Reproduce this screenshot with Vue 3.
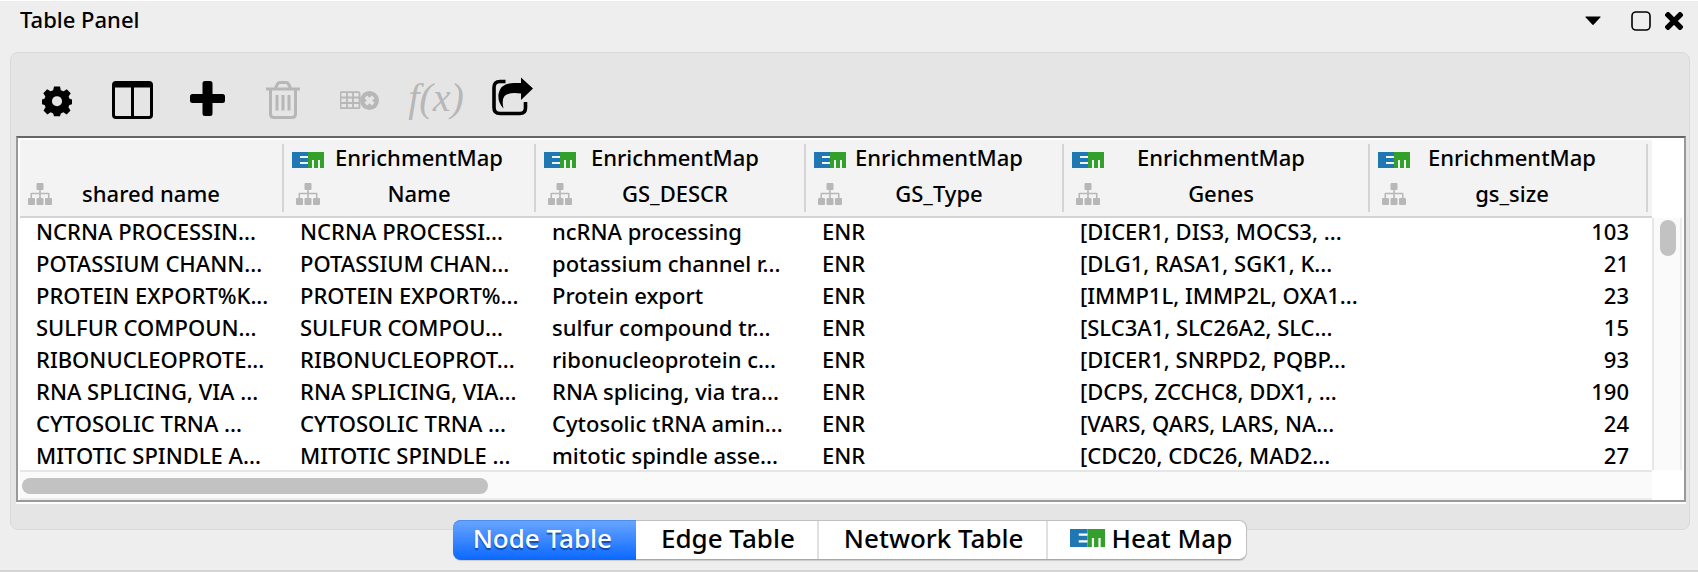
<script setup>
import { ref } from 'vue'

const columns = [
  { key: 'shared', name: 'shared name', group: '' },
  { key: 'name', name: 'Name', group: 'EnrichmentMap' },
  { key: 'descr', name: 'GS_DESCR', group: 'EnrichmentMap' },
  { key: 'type', name: 'GS_Type', group: 'EnrichmentMap' },
  { key: 'genes', name: 'Genes', group: 'EnrichmentMap' },
  { key: 'size', name: 'gs_size', group: 'EnrichmentMap' },
]

const rows = [
  ['NCRNA PROCESSIN...', 'NCRNA PROCESSI...', 'ncRNA processing', 'ENR', '[DICER1, DIS3, MOCS3, ...', 103],
  ['POTASSIUM CHANN...', 'POTASSIUM CHAN...', 'potassium channel r...', 'ENR', '[DLG1, RASA1, SGK1, K...', 21],
  ['PROTEIN EXPORT%K...', 'PROTEIN EXPORT%...', 'Protein export', 'ENR', '[IMMP1L, IMMP2L, OXA1...', 23],
  ['SULFUR COMPOUN...', 'SULFUR COMPOU...', 'sulfur compound tr...', 'ENR', '[SLC3A1, SLC26A2, SLC...', 15],
  ['RIBONUCLEOPROTE...', 'RIBONUCLEOPROT...', 'ribonucleoprotein c...', 'ENR', '[DICER1, SNRPD2, PQBP...', 93],
  ['RNA SPLICING, VIA ...', 'RNA SPLICING, VIA...', 'RNA splicing, via tra...', 'ENR', '[DCPS, ZCCHC8, DDX1, ...', 190],
  ['CYTOSOLIC TRNA ...', 'CYTOSOLIC TRNA ...', 'Cytosolic tRNA amin...', 'ENR', '[VARS, QARS, LARS, NA...', 24],
  ['MITOTIC SPINDLE A...', 'MITOTIC SPINDLE ...', 'mitotic spindle asse...', 'ENR', '[CDC20, CDC26, MAD2...', 27],
]

const tabs = ['Node Table', 'Edge Table', 'Network Table', 'Heat Map']
const active = ref('Node Table')
</script>

<template>
  <main class="window">
    <header class="titlebar">
      <h1>Table Panel</h1>
      <div class="controls">
        <button type="button" class="menu" aria-label="Panel menu">
          <svg width="16" height="10" viewBox="0 0 16 10"><path d="M1 .5h14q1 0 .4.8L8.800 8.600q-.8.800-1.600 0L.6 1.300Q0 .5 1 .5z" /></svg>
        </button>
        <button type="button" class="maximize" aria-label="Maximize">
          <svg width="20" height="20" viewBox="0 0 20 20"><rect x="1" y="1" width="18" height="18" rx="4" fill="none" stroke="#000" stroke-width="1.600" /></svg>
        </button>
        <button type="button" aria-label="Close">
          <svg width="18" height="18" viewBox="0 0 18 18"><path d="M3 3l12 12M15 3L3 15" stroke="#000" stroke-width="5.400" stroke-linecap="square" /></svg>
        </button>
      </div>
    </header>

    <section class="panel">
      <div class="toolbar">
        <button type="button" aria-label="Settings" class="gear">
          <svg width="30" height="32" viewBox="-16 -16 32 32">
            <path fill-rule="evenodd" d="M-3.200-15.500h6.400l.9 4 2.900 1.200 3.500-2.200 4.100 4.100-2.200 3.500 1 2.500 3.100.8v5l-3.300.9-1 2.400 2.200 3.500-4.100 4.100-3.500-2.200-2.700 1.100-.9 3h-6.400l-.9-3-2.700-1.100-3.500 2.200-4.100-4.100 2.200-3.500-1-2.400-3.300-.9v-5l3.100-.8 1-2.500-2.200-3.500 4.100-4.100 3.500 2.200 2.900-1.200zM0-5.200a5.400 5.400 0 1 0 0 10.800a5.400 5.400 0 1 0 0-10.800z" />
          </svg>
        </button>
        <button type="button" aria-label="Show columns" class="cols">
          <svg width="41" height="38" viewBox="0 0 41 38"><path fill-rule="evenodd" d="M4 0h33q4 0 4 4v30q0 4-4 4H4q-4 0-4-4V4q0-4 4-4zM3 6.500v27.500q0 1 1 1h15V6.500zM22 6.500V35h15q1 0 1-1V6.500z" /></svg>
        </button>
        <button type="button" aria-label="Add column" class="plus">
          <svg width="35" height="35" viewBox="0 0 35 35"><path d="M15 0h5q2.500 0 2.500 2.500v10.500h10q2.500 0 2.500 2.500v4q0 2.500-2.500 2.500h-10v10.500q0 2.500-2.500 2.500h-5q-2.500 0-2.500-2.500V22h-10Q0 22 0 19.500v-4Q0 13 2.500 13h10V2.500Q12.500 0 15 0z" /></svg>
        </button>
        <button type="button" aria-label="Delete column" class="trash" disabled>
          <svg width="34" height="38" viewBox="0 0 34 38" fill="none" stroke="#b7b7b7" stroke-width="3"><path d="M0 8h34M9 8l2.500-5q.8-1.500 2.500-1.500h6q1.700 0 2.500 1.500L25 8M4.500 8v25q0 3.500 3.500 3.500h18q3.500 0 3.500-3.500V8M11 14v15.500M17 14v15.500M23 14v15.500" /></svg>
        </button>
        <button type="button" aria-label="Delete table" class="deltable" disabled>
          <svg width="39" height="20" viewBox="0 0 39 20" fill="none" stroke="#b7b7b7">
            <path d="M1.500 1.200h17q1 0 1 1v14q0 1-1 1h-17q-1 0-1-1V2.200q0-1 1-1zM1 6.500h18M1 12h18M7 2v15M13 2v15" stroke-width="1.800" />
            <circle cx="29.500" cy="9.500" r="9.500" fill="#b7b7b7" stroke="none" />
            <path d="M25.800 5.800l7.400 7.400M33.200 5.800l-7.400 7.400" stroke="#e5e5e5" stroke-width="3.800" />
          </svg>
        </button>
        <button type="button" aria-label="Function builder" class="fx" disabled>f(x)</button>
        <button type="button" aria-label="Export" class="share">
          <svg width="41" height="39" viewBox="0 0 41 39">
            <path d="M13.500 4.500H8Q2 4.500 2 10.500v20Q2 36.500 8 36.500h20q5.500 0 5.500-5.500V25" fill="none" stroke="#000" stroke-width="3.600" />
            <path d="M29 0.500L41 11.500 29 23v-6.500Q16 15 12.500 19 9.500 23 11.500 31.500 5.500 25 6.500 17 8.500 6 22 6h7z" />
          </svg>
        </button>
      </div>

      <div class="frame">
        <div class="viewport">
          <table>
            <colgroup>
              <col v-for="c in columns" :key="c.key" :class="'w-' + c.key" />
            </colgroup>
            <thead>
              <tr>
                <th v-for="c in columns" :key="c.key" scope="col">
                  <div class="head">
                    <svg v-if="c.group" class="em" width="32" height="16" viewBox="0 0 32 16"><path fill="#1f78b4" d="M0 0h16v16H0z" /><path fill="#33a02c" d="M16 0h16v16H16z" /><path fill="#f3f3f3" d="M8 4h8v2H8zM8 10h8v2H8zM20 8h2v8h-2zM26 8h2v8h-2z" /></svg>
                    <span v-else></span>
                    <span class="label">{{ c.group }}</span>
                    <svg class="site" width="24" height="22" viewBox="0 0 24 22"><path fill="#b7b7b7" d="M9.500 0h5q1 0 1 1v5q0 1-1 1h-1.700v2.700h7.700q1 0 1 1V15h1.500q1 0 1 1v5q0 1-1 1h-5q-1 0-1-1v-5q0-1 1-1h2v-3.700h-7.200V15h1.700q1 0 1 1v5q0 1-1 1h-5q-1 0-1-1v-5q0-1 1-1h1.700v-3.700H4V15h2q1 0 1 1v5q0 1-1 1H1q-1 0-1-1v-5q0-1 1-1h1.500v-4.300q0-1 1-1h7.700V7H9.500q-1 0-1-1V1q0-1 1-1z" /></svg>
                    <span class="label">{{ c.name }}</span>
                  </div>
                </th>
              </tr>
            </thead>
            <tbody>
              <tr v-for="(r, i) in rows" :key="i">
                <td v-for="(v, j) in r" :key="j">{{ v }}</td>
              </tr>
            </tbody>
          </table>
        </div>
        <div class="vbar"><div class="vthumb"></div></div>
        <div class="hbar"><div class="hthumb"></div></div>
      </div>
    </section>

    <nav class="tabs" role="tablist">
      <button
        v-for="t in tabs"
        :key="t"
        type="button"
        role="tab"
        :aria-selected="active === t"
        :class="{ on: active === t }"
        @click="active = t"
      >
        <svg v-if="t === 'Heat Map'" width="35" height="18" viewBox="0 0 32 16" preserveAspectRatio="none"><path fill="#1f78b4" d="M0 0h16v16H0z" /><path fill="#33a02c" d="M16 0h16v16H16z" /><path fill="#fff" d="M8 4h8v2H8zM8 10h8v2H8zM20 8h2v8h-2zM26 8h2v8h-2z" /></svg>
        {{ t }}
      </button>
    </nav>
  </main>
</template>

<style>
body {
  background: #eee;
}
</style>

<style scoped>
* {
  box-sizing: border-box;
}
.window {
  font-family: "Noto Sans", "Open Sans", sans-serif;
  font-size: 22px;
  font-weight: 500;
  color: #000;
  background: #eee;
  border-top: 1px solid #fff;
  border-bottom: 2px solid #d4d4d4;
  padding: 0 8px 10px 10px;
}
button {
  margin: 0;
  padding: 0;
  border: 0;
  background: none;
  font: inherit;
  color: inherit;
}
svg {
  display: block;
  flex: none;
}
.titlebar {
  display: flex;
  justify-content: space-between;
  height: 51px;
  padding: 3px 7px 0 10px;
}
h1 {
  margin: 0;
  font-size: 22px;
  font-weight: 500;
  line-height: 30px;
}
.controls {
  display: flex;
  align-items: center;
  height: 34px;
}
.menu {
  margin-right: 30px;
}
.maximize {
  margin-right: 14px;
}
.panel {
  background: #e5e5e5;
  border: 1px solid #d9d9d9;
  border-radius: 8px;
  padding: 0 3px 27px 5px;
}
.toolbar {
  display: flex;
  align-items: center;
  height: 83px;
  padding-left: 26px;
}
.gear {
  margin: 12px 40px 0 0;
}
.cols {
  margin: 10px 37px 0 0;
}
.plus {
  margin: 8px 41px 0 0;
}
.trash {
  margin: 10px 40px 0 0;
}
.deltable {
  margin: 12px 28px 0 0;
}
.fx {
  width: 58px;
  margin: 6px 27px 0 0;
  color: #b7b7b7;
  font-family: "Liberation Serif", serif;
  font-weight: 400;
  font-style: italic;
  font-size: 40px;
  line-height: 40px;
}
.share {
  margin-top: 4px;
}
.frame {
  display: grid;
  grid-template-columns: minmax(0, 1fr) 30px;
  background: #fff;
  border: 2px solid #999;
  border-top-color: #666;
  box-shadow: 0 2px 0 #fff;
  padding: 2px 2px 0 2px;
}
.viewport {
  height: 330px;
  overflow: hidden;
}
table {
  width: 100%;
  table-layout: fixed;
  border-spacing: 0;
}
.w-shared {
  width: 264px;
}
.w-name {
  width: 252px;
}
.w-descr {
  width: 270px;
}
.w-type {
  width: 258px;
}
.w-genes {
  width: 306px;
}
th {
  padding: 0;
  height: 78px;
  font-weight: 500;
  vertical-align: top;
  border-bottom: 2px solid #d4d4d4;
  background: linear-gradient(#d4d4d4, #d4d4d4) right 4px / 2px 68px no-repeat #f3f3f3;
}
th:last-child {
  background-position: right 4px top 4px;
}
.head {
  display: grid;
  grid-template-columns: 32px minmax(0, 1fr);
  grid-auto-rows: 36px;
  align-items: center;
  justify-items: center;
  padding: 0 32px 0 8px;
}
.label {
  height: 36px;
  line-height: 34px;
}
th:first-child .head {
  padding: 0 38px 0 4px;
}
th:nth-child(2) .head {
  padding-right: 22px;
}
th:last-child .head {
  padding-right: 38px;
}
.em {
  margin-top: 4px;
}
td {
  height: 32px;
  padding: 0 0 6px 16px;
  line-height: 26px;
  white-space: nowrap;
}
td:last-child {
  padding-left: 0;
  padding-right: 23px;
  text-align: right;
}
.vbar {
  margin-top: 78px;
  padding: 2px 4px 0 6px;
  background: #fafafa;
  border-left: 2px solid #e6e6e6;
  border-right: 2px solid #ececec;
}
.vthumb {
  height: 36px;
  border-radius: 8px;
  background: #c2c2c2;
}
.hbar {
  height: 30px;
  padding: 6px 2px;
  background: #fafafa;
  border-top: 2px solid #e6e6e6;
  border-bottom: 2px solid #ececec;
}
.hthumb {
  width: 466px;
  height: 16px;
  border-radius: 8px;
  background: #c2c2c2;
}
.tabs {
  display: flex;
  position: relative;
  width: max-content;
  height: 40px;
  margin: -10px auto 0;
  background: #fff;
  border: 1px solid #c0c0c0;
  border-bottom-color: #a8a8a8;
  border-radius: 8px;
  box-shadow: 0 1px 1px rgba(0, 0, 0, 0.15);
  font-size: 26px;
  line-height: 34px;
}
.tabs button {
  display: flex;
  align-items: center;
  justify-content: center;
  gap: 7px;
  padding: 0 22px 4px 25px;
  border-right: 2px solid #e0e0e0;
}
.tabs button:last-child {
  padding: 0 14px 4px 22px;
  border-right: 0;
}
.tabs .on {
  margin: -1px 0 -1px -1px;
  padding: 0 24px 4px 20px;
  border-right: 0;
  border-radius: 8px 0 0 8px;
  color: #fff;
  background: linear-gradient(#6ba6ff, #0a68ff);
  box-shadow: inset 0 1px 0 #4a8df0;
  text-shadow: 0 2px 1px rgba(0, 40, 110, 0.6);
}
</style>
